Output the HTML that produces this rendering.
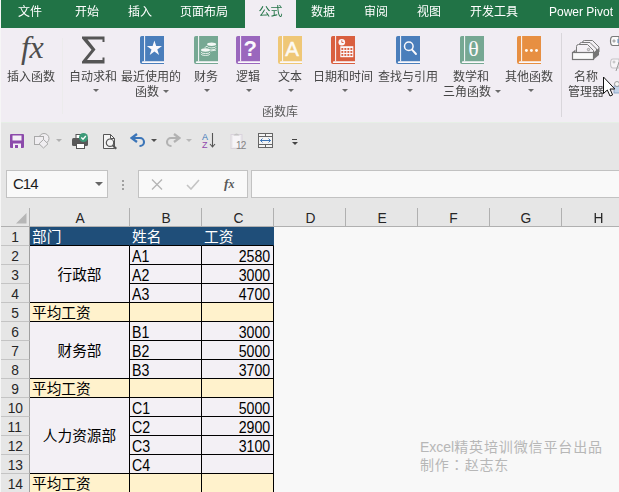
<!DOCTYPE html>
<html lang="zh-CN"><head><meta charset="utf-8"><title>Excel</title>
<style>
html,body{margin:0;padding:0}
body{width:619px;height:492px;overflow:hidden;position:relative;background:#e6e6e6;font-family:"Liberation Sans","Noto Sans CJK SC",sans-serif;font-size:12px;color:#333}
div,svg{position:absolute;box-sizing:border-box}
.t{display:inline-block;font-size:16.3px;transform:scaleX(.87);transform-origin:0 50%}
.n .t{transform-origin:100% 50%}
.u{display:inline-block;font-size:15px;transform:scaleX(.92)}
.tabs{left:0;top:0;width:619px;height:28px;background:#217346}
.tab{will-change:transform;top:0;height:28px;line-height:24px;color:#fff;font-size:12px;text-align:center;white-space:nowrap;transform:translateX(-50%)}
.tab.on{background:#f1edf3;color:#217346;width:51px;transform:none}
.rib{left:0;top:28px;width:619px;height:94px;background:#f1edf3}
.lbl{will-change:transform;font-size:12px;line-height:15px;color:#464646;text-align:center;white-space:nowrap;transform:translateX(-50%)}
.arr{width:0;height:0;border-left:3px solid transparent;border-right:3px solid transparent;border-top:3px solid #6a6a6a}
.box{background:#f9f9f9;border:1px solid #c2c2c2}
.colh{top:208px;height:18px;background:#e6e6e6;font-size:14.67px;line-height:19px;padding-left:1px;text-align:center;color:#262626}
.rowh{left:1px;width:29px;height:19px;background:#e6e6e6;font-size:14.67px;line-height:20px;text-align:center;color:#262626;border-bottom:1px solid #c4c4c4;border-right:1px solid #a0a0a0}
.c{height:19px;line-height:20px;font-size:15.3px;color:#000;white-space:nowrap;border-right:1px solid #000;border-bottom:1px solid #000;background:#f3f0f5;padding:0 3px 0 2px}
.c.h{background:#1f4e79;color:#fff;border-right-color:#1f4e79}
.c.y{background:#fff2cc}
.c.n{text-align:right}
.cj{font-size:14.67px;line-height:21px;padding-left:2px}
</style></head>
<body>
<div class="tabs"></div>
<div class="tab" style="left:30px">文件</div>
<div class="tab" style="left:87px">开始</div>
<div class="tab" style="left:140px">插入</div>
<div class="tab" style="left:204px">页面布局</div>
<div class="tab" style="left:323px">数据</div>
<div class="tab" style="left:376px">审阅</div>
<div class="tab" style="left:429px">视图</div>
<div class="tab" style="left:494px">开发工具</div>
<div class="tab" style="left:581px">Power Pivot</div>
<div class="tab on" style="left:245px">公式</div>
<div class="rib"></div>
<div style="left:62px;top:38px;width:1px;height:76px;background:#ecebec"></div>
<div style="left:561px;top:33px;width:1px;height:84px;background:#d9d6db"></div>
<div style="left:21px;top:29px;font-family:'Liberation Serif',serif;font-style:italic;font-size:32px;line-height:36px;color:#4e4e4e;letter-spacing:-0.5px">fx</div>
<div class="lbl" style="left:31px;top:69.5px">插入函数</div>
<svg style="left:80px;top:36px" width="27" height="28" viewBox="0 0 27 28"><path d="M2 0.500H24.500V6H22.500V3.500H7.500L15.500 13.500L7 24H22.500V21.500H24.500V27.500H2V25.500L11.500 13.700L2 2.500Z" fill="#555"/></svg>
<div class="lbl" style="left:93px;top:69.5px">自动求和</div>
<div class="arr" style="left:93px;top:89px"></div>
<svg style="left:140px;top:36px" width="24" height="28" viewBox="0 0 24 28"><path d="M1.8 0H24V28H2A2 2 0 0 1 0 26V1.8A1.8 1.8 0 0 1 1.8 0Z" fill="#4a7ebb"/><rect x="4.100" y="0" width="1" height="25.300" fill="#fbf9fc"/><path d="M3 25.300H24V26.900H2.200A0.800 0.800 0 0 1 2.200 25.600Z" fill="#fbf9fc"/><path d="M14.400 4.600L16.200 10.100H22L17.300 13.500L19.100 19L14.400 15.600L9.700 19L11.500 13.500L6.800 10.100H12.600Z" fill="#fbf9fc"/></svg>
<div class="lbl" style="left:151px;top:69.5px">最近使用的</div>
<div class="lbl" style="left:147px;top:84.5px">函数</div>
<div class="arr" style="left:163px;top:90px"></div>
<svg style="left:194px;top:36px" width="24" height="28" viewBox="0 0 24 28"><path d="M1.8 0H24V28H2A2 2 0 0 1 0 26V1.8A1.8 1.8 0 0 1 1.8 0Z" fill="#76a893"/><rect x="4.100" y="0" width="1" height="25.300" fill="#fbf9fc"/><path d="M3 25.300H24V26.900H2.200A0.800 0.800 0 0 1 2.200 25.600Z" fill="#fbf9fc"/><ellipse cx="17.6" cy="8.3" rx="4.500" ry="1.700" fill="#f3f8f5"/><path d="M13.100000000000001 10.200000000000001A4.500 1.700 0 0 0 22.1 10.200000000000001" fill="none" stroke="#eef5f1" stroke-width="0.900"/><path d="M13.100000000000001 12.100000000000001A4.500 1.700 0 0 0 22.1 12.100000000000001" fill="none" stroke="#eef5f1" stroke-width="0.900"/><path d="M13.100 10.200A4.500 1.700 0 0 0 22.100 14.100" fill="none" stroke="#eef5f1" stroke-width="0.900" transform="translate(0,0)"/><rect x="6.500" y="11.800" width="9.800" height="8" fill="#76a893"/><ellipse cx="11.5" cy="14" rx="4.500" ry="1.700" fill="#f3f8f5"/><path d="M7.0 15.9A4.500 1.700 0 0 0 16.0 15.9" fill="none" stroke="#eef5f1" stroke-width="0.900"/><path d="M7.0 17.8A4.500 1.700 0 0 0 16.0 17.8" fill="none" stroke="#eef5f1" stroke-width="0.900"/></svg>
<div class="lbl" style="left:206px;top:69.5px">财务</div>
<div class="arr" style="left:204px;top:89px"></div>
<svg style="left:236px;top:36px" width="24" height="28" viewBox="0 0 24 28"><path d="M1.8 0H24V28H2A2 2 0 0 1 0 26V1.8A1.8 1.8 0 0 1 1.8 0Z" fill="#9a67bd"/><rect x="4.100" y="0" width="1" height="25.300" fill="#fbf9fc"/><path d="M3 25.300H24V26.900H2.200A0.800 0.800 0 0 1 2.200 25.600Z" fill="#fbf9fc"/><text x="14.200" y="19.800" font-family="Liberation Sans,sans-serif" font-weight="bold" font-size="22" fill="#fbf9fc" text-anchor="middle">?</text></svg>
<div class="lbl" style="left:248px;top:69.5px">逻辑</div>
<div class="arr" style="left:246px;top:89px"></div>
<svg style="left:278px;top:36px" width="24" height="28" viewBox="0 0 24 28"><path d="M1.8 0H24V28H2A2 2 0 0 1 0 26V1.8A1.8 1.8 0 0 1 1.8 0Z" fill="#efc776"/><rect x="4.100" y="0" width="1" height="25.300" fill="#fbf9fc"/><path d="M3 25.300H24V26.900H2.200A0.800 0.800 0 0 1 2.200 25.600Z" fill="#fbf9fc"/><text x="14" y="19.700" font-family="Liberation Sans,sans-serif" font-size="20.500" fill="#fdfaf3" stroke="#fdfaf3" stroke-width="0.500" text-anchor="middle">A</text></svg>
<div class="lbl" style="left:290px;top:69.5px">文本</div>
<div class="arr" style="left:288px;top:89px"></div>
<svg style="left:331px;top:36px" width="24" height="28" viewBox="0 0 24 28"><path d="M1.8 0H24V28H2A2 2 0 0 1 0 26V1.8A1.8 1.8 0 0 1 1.8 0Z" fill="#d95f3f"/><rect x="4.100" y="0" width="1" height="25.300" fill="#fbf9fc"/><path d="M3 25.300H24V26.900H2.200A0.800 0.800 0 0 1 2.200 25.600Z" fill="#fbf9fc"/><circle cx="10.800" cy="6.300" r="3.300" fill="#fbf9fc"/><path d="M10.800 4.300V6.500H12.600" stroke="#d95f3f" fill="none" stroke-width="0.900"/><rect x="9.300" y="10.200" width="13" height="11" fill="#fbf9fc"/><g fill="#d95f3f"><rect x="10.4" y="12" width="1.900" height="1.900"/><rect x="13.4" y="12" width="1.900" height="1.900"/><rect x="16.4" y="12" width="1.900" height="1.900"/><rect x="19.4" y="12" width="1.900" height="1.900"/><rect x="10.4" y="15" width="1.900" height="1.900"/><rect x="13.4" y="15" width="1.900" height="1.900"/><rect x="16.4" y="15" width="1.900" height="1.900"/><rect x="19.4" y="15" width="1.900" height="1.900"/><rect x="10.4" y="18" width="1.900" height="1.900"/><rect x="13.4" y="18" width="1.900" height="1.900"/><rect x="16.4" y="18" width="1.900" height="1.900"/><rect x="19.4" y="18" width="1.900" height="1.900"/></g></svg>
<div class="lbl" style="left:343px;top:69.5px">日期和时间</div>
<div class="arr" style="left:342px;top:89px"></div>
<svg style="left:396px;top:36px" width="24" height="28" viewBox="0 0 24 28"><path d="M1.8 0H24V28H2A2 2 0 0 1 0 26V1.8A1.8 1.8 0 0 1 1.8 0Z" fill="#4a7ebb"/><rect x="4.100" y="0" width="1" height="25.300" fill="#fbf9fc"/><path d="M3 25.300H24V26.900H2.200A0.800 0.800 0 0 1 2.200 25.600Z" fill="#fbf9fc"/><circle cx="12.800" cy="10.200" r="4.300" fill="none" stroke="#fbf9fc" stroke-width="1.500"/><path d="M16 13.600L20 18" stroke="#fbf9fc" stroke-width="1.900" stroke-linecap="round"/></svg>
<div class="lbl" style="left:408px;top:69.5px">查找与引用</div>
<div class="arr" style="left:407px;top:89px"></div>
<svg style="left:460px;top:36px" width="24" height="28" viewBox="0 0 24 28"><path d="M1.8 0H24V28H2A2 2 0 0 1 0 26V1.8A1.8 1.8 0 0 1 1.8 0Z" fill="#76a893"/><rect x="4.100" y="0" width="1" height="25.300" fill="#fbf9fc"/><path d="M3 25.300H24V26.900H2.200A0.800 0.800 0 0 1 2.200 25.600Z" fill="#fbf9fc"/><text x="13.500" y="19.600" font-family="Liberation Serif,serif" font-size="22" fill="#fbf9fc" text-anchor="middle">θ</text></svg>
<div class="lbl" style="left:471px;top:69.5px">数学和</div>
<div class="lbl" style="left:467px;top:84.5px">三角函数</div>
<div class="arr" style="left:495px;top:90px"></div>
<svg style="left:517px;top:36px" width="24" height="28" viewBox="0 0 24 28"><path d="M1.8 0H24V28H2A2 2 0 0 1 0 26V1.8A1.8 1.8 0 0 1 1.8 0Z" fill="#e78f42"/><rect x="4.100" y="0" width="1" height="25.300" fill="#fbf9fc"/><path d="M3 25.300H24V26.900H2.200A0.800 0.800 0 0 1 2.200 25.600Z" fill="#fbf9fc"/><circle cx="9.400" cy="14.500" r="1.450" fill="#fdf9f3"/><circle cx="14.400" cy="14.500" r="1.450" fill="#fdf9f3"/><circle cx="19.500" cy="14.500" r="1.450" fill="#fdf9f3"/></svg>
<div class="lbl" style="left:529px;top:69.5px">其他函数</div>
<div class="arr" style="left:528px;top:89px"></div>
<svg style="left:571px;top:38px" width="30" height="24" viewBox="0 0 30 24"><g fill="#f4f1f5" stroke="#7a7a7a" stroke-width="1"><path d="M11.500 14V4.500Q11.500 2.500 13.500 2.500H21.500L28 9V14Z"/><path d="M8.500 15V6.500Q8.500 4.500 10.500 4.500H19L25.500 11V15Z"/><path d="M5.500 16V8.500Q5.500 6.500 7.500 6.500H16.500L22.500 12.500V16Z"/></g><circle cx="17.500" cy="11.500" r="1.200" fill="#ddd" stroke="#888" stroke-width="0.700"/><path d="M22.500 14.500L28 10V17L22.500 21.500Z" fill="#767676"/><path d="M1 14.500L4.500 11.500V14.500Z" fill="#767676"/><rect x="1.500" y="14.500" width="21" height="7" fill="#fafafa" stroke="#767676" stroke-width="1.200"/></svg>
<div class="lbl" style="left:586px;top:69.5px">名称</div>
<div class="lbl" style="left:586px;top:85.0px">管理器</div>
<svg style="left:608px;top:35px" width="11" height="62" viewBox="0 0 11 62"><path d="M5 1.500H11V10.500H5Q2.500 10.500 2.500 6Q2.500 1.500 5 1.500Z" fill="#fafafa" stroke="#7a7a7a" stroke-width="1.200"/><circle cx="6" cy="6" r="1.100" fill="none" stroke="#7a7a7a" stroke-width="0.800"/><path d="M9 5H11M9 7H11" stroke="#4a7ebb" stroke-width="0.900"/><path d="M5 24H11V33H5Q2.500 33 2.500 28.500Q2.500 24 5 24Z" fill="#f6f4f7" stroke="#c6c4c8" stroke-width="1.100"/><circle cx="6" cy="27" r="1" fill="none" stroke="#b0b0b0" stroke-width="0.800"/><path d="M8 36Q10 30 11 27" fill="none" stroke="#9a9a9a" stroke-width="1"/><rect x="6" y="51" width="6" height="7" fill="#c3d4ea" stroke="#7f9bbd" stroke-width="0.800"/><circle cx="9" cy="49" r="2.500" fill="#f4f4f4" stroke="#8a8a8a" stroke-width="0.800"/></svg>
<svg style="left:602px;top:75px" width="14" height="22" viewBox="0 0 14 22"><path d="M1.500 2V18.500L5.300 15L8 21L10.600 19.900L8 14H12.800Z" fill="#fff" stroke="#111" stroke-width="1" stroke-linejoin="miter"/></svg>
<div class="lbl" style="left:280px;top:104.5px;color:#5a5a5a">函数库</div>
<div style="left:0;top:122px;width:619px;height:1px;background:#e6efe6"></div>
<svg style="left:10px;top:134px" width="14" height="14" viewBox="0 0 14 14"><rect x="0" y="0" width="14" height="14" rx="1" fill="#8c4bab"/><rect x="2.500" y="1.500" width="9" height="5" fill="#f4f0f6"/><rect x="3" y="9.500" width="8" height="4.500" fill="#f4f0f6"/><rect x="5" y="11" width="3" height="3" fill="#8c4bab"/></svg>
<svg style="left:33px;top:132px" width="18" height="17" viewBox="0 0 18 17"><g fill="#f0eef1" stroke="#a9a9a9" stroke-width="1"><circle cx="11" cy="6.500" r="5"/><rect x="1.500" y="4.500" width="9" height="8"/><path d="M10.500 7.500L15 11.800L10.500 16L6 11.800Z"/></g></svg>
<div class="arr" style="left:56px;top:139px;border-top-color:#b0b0b0"></div>
<svg style="left:71px;top:132px" width="18" height="18" viewBox="0 0 18 18"><rect x="5" y="2.500" width="8" height="5" fill="#fff" stroke="#555"/><rect x="1" y="6" width="16" height="8" rx="1.500" fill="#595959"/><rect x="5.500" y="11.500" width="8" height="5" fill="#fff" stroke="#555"/><circle cx="12.500" cy="5.500" r="4.500" fill="#3c9a78"/><path d="M10.300 5.500L12 7.200L14.800 4" fill="none" stroke="#fff" stroke-width="1.300"/></svg>
<svg style="left:102px;top:133px" width="16" height="17" viewBox="0 0 16 17"><path d="M1.500 1.500H8.500L12.500 5.500V15.500H1.500Z" fill="#f4f4f4" stroke="#555" stroke-width="1"/><path d="M8.500 1.500V5.500H12.500" fill="none" stroke="#555"/><circle cx="8" cy="9.700" r="3.700" fill="#f4f4f4" stroke="#555" stroke-width="1.200"/><path d="M10.800 12.500L14.300 15.800" stroke="#555" stroke-width="2"/></svg>
<svg style="left:130px;top:133px" width="17" height="15" viewBox="0 0 17 15"><path d="M1.800 5H10A4 4 0 0 1 10 13H9.500" fill="none" stroke="#3b75b8" stroke-width="2.100"/><path d="M7 1L1.500 5L7 9" fill="none" stroke="#3b75b8" stroke-width="2.300"/></svg>
<div class="arr" style="left:151px;top:139px;border-top-color:#505050"></div>
<svg style="left:164px;top:133px" width="17" height="15" viewBox="0 0 17 15"><path d="M15.200 5H7A4 4 0 0 0 7 13H7.500" fill="none" stroke="#b2b2b2" stroke-width="2.100"/><path d="M10 1L15.500 5L10 9" fill="none" stroke="#b2b2b2" stroke-width="2.300"/></svg>
<div class="arr" style="left:186px;top:139px;border-top-color:#b8b8b8"></div>
<div style="left:202px;top:133px;font-size:9px;line-height:9px;color:#3b75b8">A</div>
<div style="left:202px;top:141px;font-size:9px;line-height:9px;color:#9148ad">Z</div>
<svg style="left:208px;top:132px" width="10" height="17" viewBox="0 0 10 17"><path d="M4.500 1V15M2 12L4.500 15L7 12" fill="none" stroke="#555" stroke-width="1.100"/></svg>
<svg style="left:230px;top:132px" width="14" height="18" viewBox="0 0 14 18"><rect x="1" y="2.500" width="11" height="14" fill="#eeecef" stroke="#d9d3dc"/><rect x="3" y="4" width="7" height="11" fill="#f6f4f7"/><path d="M3.500 3.500Q6.500 -0.500 9.500 3.500Z" fill="#c4c4c4"/></svg>
<div style="left:236px;top:141px;font-size:10px;line-height:9px;color:#848484;letter-spacing:-0.700px">12</div>
<svg style="left:258px;top:133px" width="16" height="16" viewBox="0 0 16 16"><rect x="0.500" y="0.500" width="14" height="14" fill="#f4f4f4" stroke="#666"/><path d="M0.500 3.500H14.500M0.500 11.500H14.500M7.500 0.500V3.500M7.500 11.500V14.500" stroke="#666" fill="none"/><path d="M2.500 7.500H12.500M4.500 5.500L2.500 7.500L4.500 9.500M10.500 5.500L12.500 7.500L10.500 9.500" stroke="#3b75b8" fill="none"/></svg>
<div style="left:292px;top:139px;width:5px;height:1px;background:#444"></div>
<div class="arr" style="left:291.5px;top:142px;border-top-color:#444"></div>
<div class="box" style="left:6px;top:170px;width:102px;height:28px"></div>
<div style="left:13px;top:175px;font-size:15px;line-height:18px;letter-spacing:-1px;color:#1c1c1c">C14</div>
<div class="arr" style="left:95px;top:182px;border-width:4px 4px 0 4px;border-top-color:#666"></div>
<div style="left:122px;top:180px;width:2px;height:2px;background:#a0a0a0"></div>
<div style="left:122px;top:184px;width:2px;height:2px;background:#a0a0a0"></div>
<div style="left:122px;top:188px;width:2px;height:2px;background:#a0a0a0"></div>
<div class="box" style="left:138px;top:170px;width:110px;height:28px"></div>
<svg style="left:151px;top:179px" width="12" height="11" viewBox="0 0 12 11"><path d="M1 0.500L11 10.500M11 0.500L1 10.500" stroke="#b4b4b4" stroke-width="1.300"/></svg>
<svg style="left:186px;top:179px" width="14" height="11" viewBox="0 0 14 11"><path d="M1 6L5 10L13 1" fill="none" stroke="#c4c4c4" stroke-width="1.600"/></svg>
<div style="left:224px;top:175px;font-family:'Liberation Serif',serif;font-style:italic;font-weight:bold;font-size:13.500px;line-height:18px;color:#5a5a5a">f<span style="font-size:12px">x</span></div>
<div class="box" style="left:251px;top:170px;width:380px;height:28px"></div>
<div style="left:30px;top:227px;width:589px;height:265px;background:#f8f8f8"></div>
<div style="left:1px;top:226px;width:618px;height:1px;background:#b0b0b0"></div>
<div class="colh" style="left:30px;width:99px"><span class="u">A</span></div>
<div style="left:129px;top:208px;width:1px;height:18px;background:#b0b0b0"></div>
<div class="colh" style="left:130px;width:71px"><span class="u">B</span></div>
<div style="left:201px;top:208px;width:1px;height:18px;background:#b0b0b0"></div>
<div class="colh" style="left:202px;width:71px"><span class="u">C</span></div>
<div style="left:273px;top:208px;width:1px;height:18px;background:#b0b0b0"></div>
<div class="colh" style="left:274px;width:71px"><span class="u">D</span></div>
<div style="left:345px;top:208px;width:1px;height:18px;background:#b0b0b0"></div>
<div class="colh" style="left:346px;width:71px"><span class="u">E</span></div>
<div style="left:417px;top:208px;width:1px;height:18px;background:#b0b0b0"></div>
<div class="colh" style="left:418px;width:71px"><span class="u">F</span></div>
<div style="left:489px;top:208px;width:1px;height:18px;background:#b0b0b0"></div>
<div class="colh" style="left:490px;width:71px"><span class="u">G</span></div>
<div style="left:561px;top:208px;width:1px;height:18px;background:#b0b0b0"></div>
<div class="colh" style="left:562px;width:71px"><span class="u">H</span></div>
<div style="left:633px;top:208px;width:1px;height:18px;background:#b0b0b0"></div>
<div style="left:29px;top:208px;width:1px;height:18px;background:#b0b0b0"></div>
<svg style="left:15px;top:212px" width="12" height="12" viewBox="0 0 12 12"><path d="M11.500 1V11.500H1Z" fill="#b6b6b6"/></svg>
<div class="rowh" style="top:227px"><span class="u">1</span></div>
<div class="rowh" style="top:246px"><span class="u">2</span></div>
<div class="rowh" style="top:265px"><span class="u">3</span></div>
<div class="rowh" style="top:284px"><span class="u">4</span></div>
<div class="rowh" style="top:303px"><span class="u">5</span></div>
<div class="rowh" style="top:322px"><span class="u">6</span></div>
<div class="rowh" style="top:341px"><span class="u">7</span></div>
<div class="rowh" style="top:360px"><span class="u">8</span></div>
<div class="rowh" style="top:379px"><span class="u">9</span></div>
<div class="rowh" style="top:398px"><span class="u">10</span></div>
<div class="rowh" style="top:417px"><span class="u">11</span></div>
<div class="rowh" style="top:436px"><span class="u">12</span></div>
<div class="rowh" style="top:455px"><span class="u">13</span></div>
<div class="rowh" style="top:474px"><span class="u">14</span></div>
<div class="c h cj" style="left:30px;top:227px;width:100px;height:19px;">部门</div>
<div class="c h cj" style="left:130px;top:227px;width:72px;height:19px;">姓名</div>
<div class="c h cj" style="left:202px;top:227px;width:72px;height:19px;">工资</div>
<div class="c cj" style="left:30px;top:246px;width:100px;height:57px;line-height:58px;text-align:center;padding:0;">行政部</div>
<div class="c " style="left:130px;top:246px;width:72px;height:19px;"><span class="t">A1</span></div>
<div class="c " style="left:130px;top:265px;width:72px;height:19px;"><span class="t">A2</span></div>
<div class="c " style="left:130px;top:284px;width:72px;height:19px;"><span class="t">A3</span></div>
<div class="c n" style="left:202px;top:246px;width:72px;height:19px;"><span class="t">2580</span></div>
<div class="c n" style="left:202px;top:265px;width:72px;height:19px;"><span class="t">3000</span></div>
<div class="c n" style="left:202px;top:284px;width:72px;height:19px;"><span class="t">4700</span></div>
<div class="c y cj" style="left:30px;top:303px;width:100px;height:19px;">平均工资</div>
<div class="c y" style="left:130px;top:303px;width:72px;height:19px;"></div>
<div class="c y" style="left:202px;top:303px;width:72px;height:19px;"></div>
<div class="c cj" style="left:30px;top:322px;width:100px;height:57px;line-height:58px;text-align:center;padding:0;">财务部</div>
<div class="c " style="left:130px;top:322px;width:72px;height:19px;"><span class="t">B1</span></div>
<div class="c " style="left:130px;top:341px;width:72px;height:19px;"><span class="t">B2</span></div>
<div class="c " style="left:130px;top:360px;width:72px;height:19px;"><span class="t">B3</span></div>
<div class="c n" style="left:202px;top:322px;width:72px;height:19px;"><span class="t">3000</span></div>
<div class="c n" style="left:202px;top:341px;width:72px;height:19px;"><span class="t">5000</span></div>
<div class="c n" style="left:202px;top:360px;width:72px;height:19px;"><span class="t">3700</span></div>
<div class="c y cj" style="left:30px;top:379px;width:100px;height:19px;">平均工资</div>
<div class="c y" style="left:130px;top:379px;width:72px;height:19px;"></div>
<div class="c y" style="left:202px;top:379px;width:72px;height:19px;"></div>
<div class="c cj" style="left:30px;top:398px;width:100px;height:76px;line-height:77px;text-align:center;padding:0;">人力资源部</div>
<div class="c " style="left:130px;top:398px;width:72px;height:19px;"><span class="t">C1</span></div>
<div class="c " style="left:130px;top:417px;width:72px;height:19px;"><span class="t">C2</span></div>
<div class="c " style="left:130px;top:436px;width:72px;height:19px;"><span class="t">C3</span></div>
<div class="c " style="left:130px;top:455px;width:72px;height:19px;"><span class="t">C4</span></div>
<div class="c n" style="left:202px;top:398px;width:72px;height:19px;"><span class="t">5000</span></div>
<div class="c n" style="left:202px;top:417px;width:72px;height:19px;"><span class="t">2900</span></div>
<div class="c n" style="left:202px;top:436px;width:72px;height:19px;"><span class="t">3100</span></div>
<div class="c n" style="left:202px;top:455px;width:72px;height:19px;"></div>
<div class="c y cj" style="left:30px;top:474px;width:100px;height:19px;">平均工资</div>
<div class="c y" style="left:130px;top:474px;width:72px;height:19px;"></div>
<div class="c y" style="left:202px;top:474px;width:72px;height:19px;"></div>
<div style="left:420px;top:437.5px;font-size:14px;line-height:18px;color:#b7b7b7;white-space:nowrap;letter-spacing:0.870px"><span style="letter-spacing:0">Excel</span>精英培训微信平台出品</div>
<div style="left:420px;top:456px;font-size:14px;line-height:18px;color:#b7b7b7;white-space:nowrap;letter-spacing:0.870px">制作<span lang="ja" style="position:static;font-family:'Liberation Sans','Noto Sans CJK JP',sans-serif">：</span>赵志东</div>
<div style="left:0;top:0;width:1px;height:492px;background:#f6f6f6"></div>
</body></html>
